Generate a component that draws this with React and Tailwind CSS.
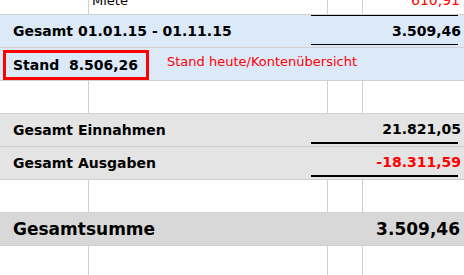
const line = "border-[#d0d0d0]";

// plain spreadsheet row with the four column separators
function GridRow({ h = "h-[33px]", children }) {
  return (
    <div className={`flex ${h} border-b ${line}`}>
      <div className={`w-[89px] border-r ${line}`} />
      <div className={`w-[239px] border-r ${line} overflow-hidden`}>{children?.[0]}</div>
      <div className={`w-[35px] border-r ${line}`} />
      <div className="flex-1 overflow-hidden">{children?.[1]}</div>
    </div>
  );
}

// summary row: bold label left, underlined amount right
function SumRow({ label, value, bg, valueColor = "text-black", rule = "border-b-2" }) {
  return (
    <div className={`flex h-[33px] border-b ${line} ${bg}`}>
      <div className="flex-1 flex items-center pl-[13px] text-[14px] font-bold text-black">{label}</div>
      <div className={`w-[147px] h-[30px] mr-[6px] ${rule} border-black flex items-center justify-end pt-[2px]`}>
        <span className={`-mr-[3px] text-[14px] font-bold ${valueColor}`}>{value}</span>
      </div>
    </div>
  );
}

export default function App() {
  return (
    <div className="w-[464px] h-[275px] overflow-hidden bg-white font-['DejaVu_Sans',sans-serif] leading-none">
      {/* previous booking row, cut off at the top */}
      <GridRow h="h-[15px]">
        <div className="pl-[3px] -mt-[6px] text-[13px] text-black">Miete</div>
        <div className="pr-[4px] -mt-[7px] text-right text-[14px] text-[#ff0000]">610,91</div>
      </GridRow>

      {/* period total */}
      <div className={`flex h-[33px] border-b ${line} bg-[#dbe9f9]`}>
        <div className="flex-1 flex items-center pl-[13px] text-[14px] font-bold text-black">
          Gesamt 01.01.15 - 01.11.15
        </div>
        <div className="w-[147px] h-[30px] mr-[6px] border-y border-black flex items-center justify-end pt-[2px]">
          <span className="-mr-[3px] text-[14px] font-bold text-black">3.509,46</span>
        </div>
      </div>

      {/* current balance */}
      <div className={`flex h-[33px] border-b ${line} bg-[#dbe9f9]`}>
        <div className="ml-[3px] mt-[2px] w-[146px] h-[30px] border-[3px] border-[#ff0000] flex items-center pl-[7px] text-[14px] font-bold text-black whitespace-pre">
          {"Stand  8.506,26"}
        </div>
        <div className="ml-[18px] mt-[7px] text-[13px] text-[#ff0000]">Stand heute/Kontenübersicht</div>
      </div>

      <GridRow />

      <SumRow label="Gesamt Einnahmen" value="21.821,05" bg="bg-[#e4e4e4]" />
      <SumRow label="Gesamt Ausgaben" value="-18.311,59" bg="bg-[#e4e4e4]" valueColor="text-[#ff0000]" />

      <GridRow />

      {/* grand total */}
      <div className={`flex h-[33px] border-b ${line} bg-[#d8d8d8] items-center`}>
        <div className="flex-1 pl-[13px] text-[17px] font-bold text-black">Gesamtsumme</div>
        <div className="pr-[4px] text-[17px] font-bold text-black">3.509,46</div>
      </div>

      <GridRow h="h-[40px]" />
    </div>
  );
}
